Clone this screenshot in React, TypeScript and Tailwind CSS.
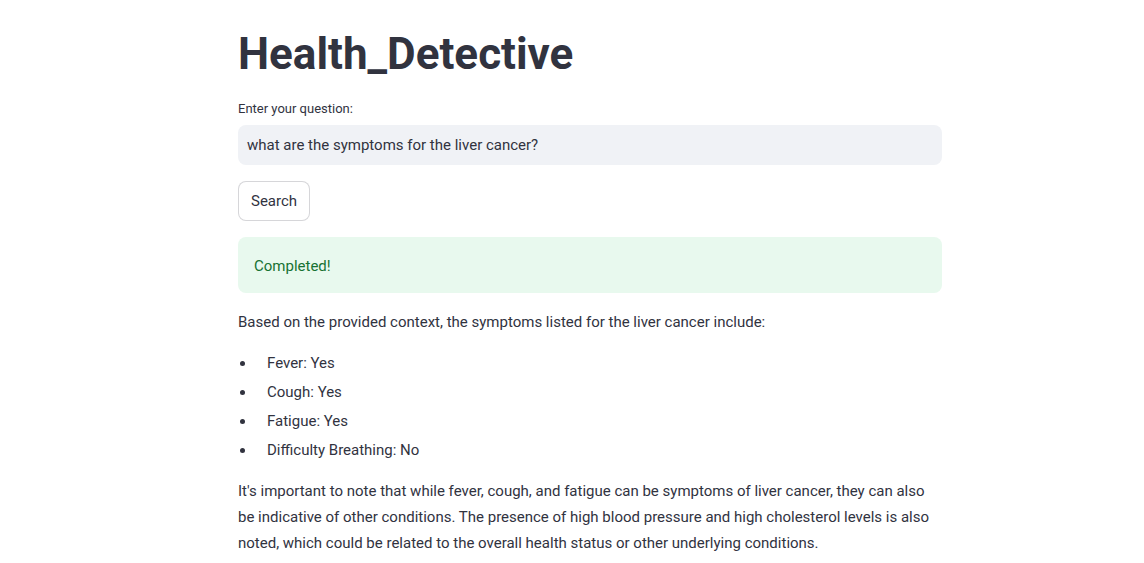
export default function App() {
  const items = ["Fever: Yes", "Cough: Yes", "Fatigue: Yes", "Difficulty Breathing: No"];
  return (
    <div className="min-h-[563px] w-full bg-white text-[#31333f] font-['Roboto',sans-serif]">
      <div className="ml-[238px] flex w-[704px] flex-col pt-[28px]">
        <h1 className="text-[44px] font-bold leading-[52px]">Health_Detective</h1>
        <label className="mt-[20px] text-[13px] leading-[18px]">Enter your question:</label>
        <div className="mt-[7px] flex h-[40px] items-center rounded-lg bg-[#f0f2f6] px-[9px] text-[15px]">
          what are the symptoms for the liver cancer?
        </div>
        <div className="mt-[16px]">
          <button className="h-[40px] rounded-lg border border-[#31333f]/20 bg-white px-[12px] text-[15px]">Search</button>
        </div>
        <div className="mt-[16px] flex h-[56px] items-center rounded-lg bg-[#e8f9ee] px-[16px] pt-[2px] text-[15px] text-[#177233]">
          Completed!
        </div>
        <p className="mt-[16px] text-[15px] leading-[26px]">
          Based on the provided context, the symptoms listed for the liver cancer include:
        </p>
        <ul className="mt-[15px] flex flex-col gap-[3px]">
          {items.map((t) => (
            <li key={t} className="flex items-center text-[15px] leading-[26px]">
              <span className="ml-[2px] mr-[22px] inline-block h-[5px] w-[5px] rounded-full bg-[#31333f]" />
              {t}
            </li>
          ))}
        </ul>
        <p className="mt-[15px] text-[15px] leading-[26px]">
          It's important to note that while fever, cough, and fatigue can be symptoms of liver cancer, they can also
          <br />
          be indicative of other conditions. The presence of high blood pressure and high cholesterol levels is also
          <br />
          noted, which could be related to the overall health status or other underlying conditions.
        </p>
      </div>
    </div>
  );
}
